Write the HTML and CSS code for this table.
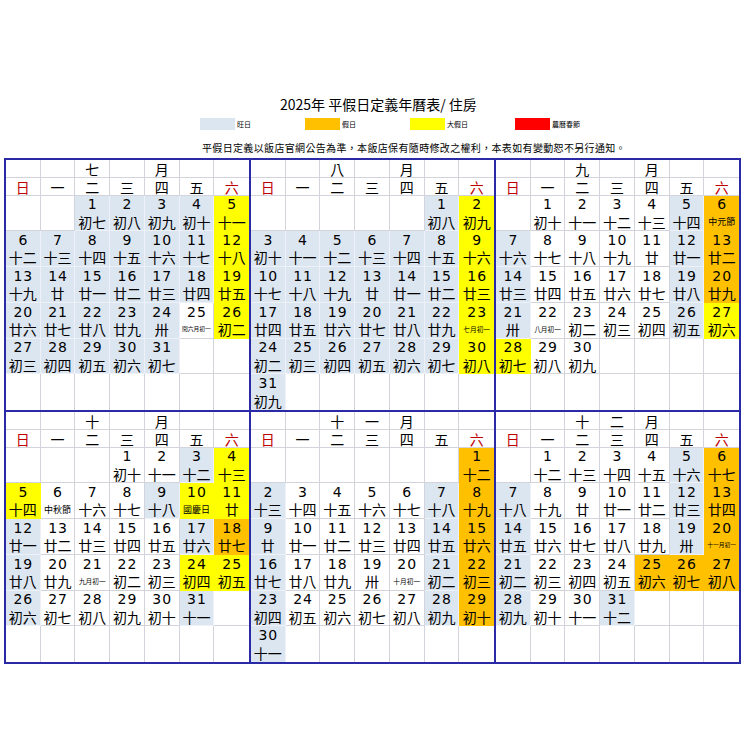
FILE: index.html
```html
<!DOCTYPE html>
<html lang="zh-Hant">
<head>
<meta charset="utf-8">
<title>2025年 平假日定義年曆表</title>
<link rel="stylesheet" href="styles.css">
</head>
<body>
<div class="page">
  <div class="title">2025年 平假日定義年曆表/ 住房</div>
  <div class="legend">
    <div class="item"><span class="sw sw-b"></span><span class="lab">旺日</span></div>
    <div class="item"><span class="sw sw-o"></span><span class="lab">假日</span></div>
    <div class="item"><span class="sw sw-y"></span><span class="lab">大假日</span></div>
    <div class="item"><span class="sw sw-r"></span><span class="lab">農曆春節</span></div>
  </div>
  <div class="note">平假日定義以飯店官網公告為準，本飯店保有隨時修改之權利，本表如有變動恕不另行通知。</div>

  <div class="calendar">
    <!-- July -->
    <div class="m">
      <div class="h"></div><div class="h"></div><div class="h">七</div><div class="h"></div><div class="h">月</div><div class="h"></div><div class="h"></div>
      <div class="w r">日</div><div class="w">一</div><div class="w">二</div><div class="w">三</div><div class="w">四</div><div class="w">五</div><div class="w r">六</div>
      <div class="d"></div><div class="d"></div><div class="d b"><b>1</b><i>初七</i></div><div class="d b"><b>2</b><i>初八</i></div><div class="d b"><b>3</b><i>初九</i></div><div class="d b"><b>4</b><i>初十</i></div><div class="d y"><b>5</b><i>十一</i></div>
      <div class="d b"><b>6</b><i>十二</i></div><div class="d b"><b>7</b><i>十三</i></div><div class="d b"><b>8</b><i>十四</i></div><div class="d b"><b>9</b><i>十五</i></div><div class="d b"><b>10</b><i>十六</i></div><div class="d b"><b>11</b><i>十七</i></div><div class="d y"><b>12</b><i>十八</i></div>
      <div class="d b"><b>13</b><i>十九</i></div><div class="d b"><b>14</b><i>廿</i></div><div class="d b"><b>15</b><i>廿一</i></div><div class="d b"><b>16</b><i>廿二</i></div><div class="d b"><b>17</b><i>廿三</i></div><div class="d b"><b>18</b><i>廿四</i></div><div class="d y"><b>19</b><i>廿五</i></div>
      <div class="d b"><b>20</b><i>廿六</i></div><div class="d b"><b>21</b><i>廿七</i></div><div class="d b"><b>22</b><i>廿八</i></div><div class="d b"><b>23</b><i>廿九</i></div><div class="d b"><b>24</b><i>卅</i></div><div class="d"><b>25</b><i class="xs">閏六月初一</i></div><div class="d y"><b>26</b><i>初二</i></div>
      <div class="d b"><b>27</b><i>初三</i></div><div class="d b"><b>28</b><i>初四</i></div><div class="d b"><b>29</b><i>初五</i></div><div class="d b"><b>30</b><i>初六</i></div><div class="d b"><b>31</b><i>初七</i></div><div class="d"></div><div class="d"></div>
      <div class="d"></div><div class="d"></div><div class="d"></div><div class="d"></div><div class="d"></div><div class="d"></div><div class="d"></div>
    </div>
    <!-- August -->
    <div class="m">
      <div class="h"></div><div class="h"></div><div class="h">八</div><div class="h"></div><div class="h">月</div><div class="h"></div><div class="h"></div>
      <div class="w r">日</div><div class="w">一</div><div class="w">二</div><div class="w">三</div><div class="w">四</div><div class="w">五</div><div class="w r">六</div>
      <div class="d"></div><div class="d"></div><div class="d"></div><div class="d"></div><div class="d"></div><div class="d b"><b>1</b><i>初八</i></div><div class="d y"><b>2</b><i>初九</i></div>
      <div class="d b"><b>3</b><i>初十</i></div><div class="d b"><b>4</b><i>十一</i></div><div class="d b"><b>5</b><i>十二</i></div><div class="d b"><b>6</b><i>十三</i></div><div class="d b"><b>7</b><i>十四</i></div><div class="d b"><b>8</b><i>十五</i></div><div class="d y"><b>9</b><i>十六</i></div>
      <div class="d b"><b>10</b><i>十七</i></div><div class="d b"><b>11</b><i>十八</i></div><div class="d b"><b>12</b><i>十九</i></div><div class="d b"><b>13</b><i>廿</i></div><div class="d b"><b>14</b><i>廿一</i></div><div class="d b"><b>15</b><i>廿二</i></div><div class="d y"><b>16</b><i>廿三</i></div>
      <div class="d b"><b>17</b><i>廿四</i></div><div class="d b"><b>18</b><i>廿五</i></div><div class="d b"><b>19</b><i>廿六</i></div><div class="d b"><b>20</b><i>廿七</i></div><div class="d b"><b>21</b><i>廿八</i></div><div class="d b"><b>22</b><i>廿九</i></div><div class="d y"><b>23</b><i class="sm">七月初一</i></div>
      <div class="d b"><b>24</b><i>初二</i></div><div class="d b"><b>25</b><i>初三</i></div><div class="d b"><b>26</b><i>初四</i></div><div class="d b"><b>27</b><i>初五</i></div><div class="d b"><b>28</b><i>初六</i></div><div class="d b"><b>29</b><i>初七</i></div><div class="d y"><b>30</b><i>初八</i></div>
      <div class="d b"><b>31</b><i>初九</i></div><div class="d"></div><div class="d"></div><div class="d"></div><div class="d"></div><div class="d"></div><div class="d"></div>
    </div>
    <!-- September -->
    <div class="m">
      <div class="h"></div><div class="h"></div><div class="h">九</div><div class="h"></div><div class="h">月</div><div class="h"></div><div class="h"></div>
      <div class="w r">日</div><div class="w">一</div><div class="w">二</div><div class="w">三</div><div class="w">四</div><div class="w">五</div><div class="w r">六</div>
      <div class="d"></div><div class="d"><b>1</b><i>初十</i></div><div class="d"><b>2</b><i>十一</i></div><div class="d"><b>3</b><i>十二</i></div><div class="d"><b>4</b><i>十三</i></div><div class="d b"><b>5</b><i>十四</i></div><div class="d o"><b>6</b><i class="md">中元節</i></div>
      <div class="d b"><b>7</b><i>十六</i></div><div class="d"><b>8</b><i>十七</i></div><div class="d"><b>9</b><i>十八</i></div><div class="d"><b>10</b><i>十九</i></div><div class="d"><b>11</b><i>廿</i></div><div class="d b"><b>12</b><i>廿一</i></div><div class="d o"><b>13</b><i>廿二</i></div>
      <div class="d b"><b>14</b><i>廿三</i></div><div class="d"><b>15</b><i>廿四</i></div><div class="d"><b>16</b><i>廿五</i></div><div class="d"><b>17</b><i>廿六</i></div><div class="d"><b>18</b><i>廿七</i></div><div class="d b"><b>19</b><i>廿八</i></div><div class="d o"><b>20</b><i>廿九</i></div>
      <div class="d b"><b>21</b><i>卅</i></div><div class="d"><b>22</b><i class="sm">八月初一</i></div><div class="d"><b>23</b><i>初二</i></div><div class="d"><b>24</b><i>初三</i></div><div class="d"><b>25</b><i>初四</i></div><div class="d b"><b>26</b><i>初五</i></div><div class="d y"><b>27</b><i>初六</i></div>
      <div class="d y"><b>28</b><i>初七</i></div><div class="d"><b>29</b><i>初八</i></div><div class="d"><b>30</b><i>初九</i></div><div class="d"></div><div class="d"></div><div class="d"></div><div class="d"></div>
      <div class="d"></div><div class="d"></div><div class="d"></div><div class="d"></div><div class="d"></div><div class="d"></div><div class="d"></div>
    </div>
    <!-- October -->
    <div class="m">
      <div class="h"></div><div class="h"></div><div class="h">十</div><div class="h"></div><div class="h">月</div><div class="h"></div><div class="h"></div>
      <div class="w r">日</div><div class="w">一</div><div class="w">二</div><div class="w">三</div><div class="w">四</div><div class="w">五</div><div class="w r">六</div>
      <div class="d"></div><div class="d"></div><div class="d"></div><div class="d"><b>1</b><i>初十</i></div><div class="d"><b>2</b><i>十一</i></div><div class="d b"><b>3</b><i>十二</i></div><div class="d y"><b>4</b><i>十三</i></div>
      <div class="d y"><b>5</b><i>十四</i></div><div class="d"><b>6</b><i class="md">中秋節</i></div><div class="d"><b>7</b><i>十六</i></div><div class="d"><b>8</b><i>十七</i></div><div class="d b"><b>9</b><i>十八</i></div><div class="d y"><b>10</b><i class="md">國慶日</i></div><div class="d y"><b>11</b><i>廿</i></div>
      <div class="d b"><b>12</b><i>廿一</i></div><div class="d"><b>13</b><i>廿二</i></div><div class="d"><b>14</b><i>廿三</i></div><div class="d"><b>15</b><i>廿四</i></div><div class="d"><b>16</b><i>廿五</i></div><div class="d b"><b>17</b><i>廿六</i></div><div class="d o"><b>18</b><i>廿七</i></div>
      <div class="d b"><b>19</b><i>廿八</i></div><div class="d"><b>20</b><i>廿九</i></div><div class="d"><b>21</b><i class="sm">九月初一</i></div><div class="d"><b>22</b><i>初二</i></div><div class="d"><b>23</b><i>初三</i></div><div class="d y"><b>24</b><i>初四</i></div><div class="d y"><b>25</b><i>初五</i></div>
      <div class="d b"><b>26</b><i>初六</i></div><div class="d"><b>27</b><i>初七</i></div><div class="d"><b>28</b><i>初八</i></div><div class="d"><b>29</b><i>初九</i></div><div class="d"><b>30</b><i>初十</i></div><div class="d b"><b>31</b><i>十一</i></div><div class="d"></div>
      <div class="d"></div><div class="d"></div><div class="d"></div><div class="d"></div><div class="d"></div><div class="d"></div><div class="d"></div>
    </div>
    <!-- November -->
    <div class="m">
      <div class="h"></div><div class="h"></div><div class="h">十</div><div class="h">一</div><div class="h">月</div><div class="h"></div><div class="h"></div>
      <div class="w r">日</div><div class="w">一</div><div class="w">二</div><div class="w">三</div><div class="w">四</div><div class="w">五</div><div class="w r">六</div>
      <div class="d"></div><div class="d"></div><div class="d"></div><div class="d"></div><div class="d"></div><div class="d"></div><div class="d o"><b>1</b><i>十二</i></div>
      <div class="d b"><b>2</b><i>十三</i></div><div class="d"><b>3</b><i>十四</i></div><div class="d"><b>4</b><i>十五</i></div><div class="d"><b>5</b><i>十六</i></div><div class="d"><b>6</b><i>十七</i></div><div class="d b"><b>7</b><i>十八</i></div><div class="d o"><b>8</b><i>十九</i></div>
      <div class="d b"><b>9</b><i>廿</i></div><div class="d"><b>10</b><i>廿一</i></div><div class="d"><b>11</b><i>廿二</i></div><div class="d"><b>12</b><i>廿三</i></div><div class="d"><b>13</b><i>廿四</i></div><div class="d b"><b>14</b><i>廿五</i></div><div class="d o"><b>15</b><i>廿六</i></div>
      <div class="d b"><b>16</b><i>廿七</i></div><div class="d"><b>17</b><i>廿八</i></div><div class="d"><b>18</b><i>廿九</i></div><div class="d"><b>19</b><i>卅</i></div><div class="d"><b>20</b><i class="sm">十月初一</i></div><div class="d b"><b>21</b><i>初二</i></div><div class="d o"><b>22</b><i>初三</i></div>
      <div class="d b"><b>23</b><i>初四</i></div><div class="d"><b>24</b><i>初五</i></div><div class="d"><b>25</b><i>初六</i></div><div class="d"><b>26</b><i>初七</i></div><div class="d"><b>27</b><i>初八</i></div><div class="d b"><b>28</b><i>初九</i></div><div class="d o"><b>29</b><i>初十</i></div>
      <div class="d b"><b>30</b><i>十一</i></div><div class="d"></div><div class="d"></div><div class="d"></div><div class="d"></div><div class="d"></div><div class="d"></div>
    </div>
    <!-- December -->
    <div class="m">
      <div class="h"></div><div class="h"></div><div class="h">十</div><div class="h">二</div><div class="h">月</div><div class="h"></div><div class="h"></div>
      <div class="w r">日</div><div class="w">一</div><div class="w">二</div><div class="w">三</div><div class="w">四</div><div class="w">五</div><div class="w r">六</div>
      <div class="d"></div><div class="d"><b>1</b><i>十二</i></div><div class="d"><b>2</b><i>十三</i></div><div class="d"><b>3</b><i>十四</i></div><div class="d"><b>4</b><i>十五</i></div><div class="d b"><b>5</b><i>十六</i></div><div class="d o"><b>6</b><i>十七</i></div>
      <div class="d b"><b>7</b><i>十八</i></div><div class="d"><b>8</b><i>十九</i></div><div class="d"><b>9</b><i>廿</i></div><div class="d"><b>10</b><i>廿一</i></div><div class="d"><b>11</b><i>廿二</i></div><div class="d b"><b>12</b><i>廿三</i></div><div class="d o"><b>13</b><i>廿四</i></div>
      <div class="d b"><b>14</b><i>廿五</i></div><div class="d"><b>15</b><i>廿六</i></div><div class="d"><b>16</b><i>廿七</i></div><div class="d"><b>17</b><i>廿八</i></div><div class="d"><b>18</b><i>廿九</i></div><div class="d b"><b>19</b><i>卅</i></div><div class="d o"><b>20</b><i class="xs">十一月初一</i></div>
      <div class="d b"><b>21</b><i>初二</i></div><div class="d"><b>22</b><i>初三</i></div><div class="d"><b>23</b><i>初四</i></div><div class="d"><b>24</b><i>初五</i></div><div class="d o"><b>25</b><i>初六</i></div><div class="d o"><b>26</b><i>初七</i></div><div class="d o"><b>27</b><i>初八</i></div>
      <div class="d b"><b>28</b><i>初九</i></div><div class="d"><b>29</b><i>初十</i></div><div class="d"><b>30</b><i>十一</i></div><div class="d b"><b>31</b><i>十二</i></div><div class="d"></div><div class="d"></div><div class="d"></div>
      <div class="d"></div><div class="d"></div><div class="d"></div><div class="d"></div><div class="d"></div><div class="d"></div><div class="d"></div>
    </div>
  </div>
</div>
</body>
</html>
```

FILE: styles.css
```css
* { box-sizing: border-box; }
html, body { margin: 0; padding: 0; background: #fff; }
body {
  font-family: "Noto Sans CJK TC", "Noto Sans", sans-serif;
  color: #000;
}
.page { padding-top: 94px; }

.title {
  margin-left: 280px;
  font-size: 14px;
  line-height: 20px;
  height: 20px;
  white-space: nowrap;
}

.legend {
  display: flex;
  margin-left: 200px;
  margin-top: 4px;
  height: 12px;
}
.legend .item {
  width: 105px;
  display: flex;
  align-items: center;
  gap: 2px;
}
.sw { display: block; width: 35px; height: 12px; }
.sw-b { background: #dce6f1; }
.sw-o { background: #ffc000; }
.sw-y { background: #ffff00; }
.sw-r { background: #ff0000; }
.lab { font-size: 7px; line-height: 12px; white-space: nowrap; }

.note {
  margin-left: 202px;
  margin-top: 11px;
  font-size: 10px;
  line-height: 14px;
  height: 14px;
  letter-spacing: 0.34px;
  white-space: nowrap;
}

.calendar {
  margin-top: 3px;
  margin-left: 4px;
  display: grid;
  grid-template-columns: repeat(3, 245px);
  width: 737px;
  border-left: 2px solid #2a2aa6;
  border-top: 2px solid #2a2aa6;
}
.m {
  display: grid;
  grid-template-columns: repeat(7, 1fr);
  grid-template-rows: 1fr 1fr repeat(6, 2fr);
  height: 252px;
  border-right: 2px solid #2a2aa6;
  border-bottom: 2px solid #2a2aa6;
}
.m > div {
  border-right: 1px solid #d3d3dc;
  border-bottom: 1px solid #d3d3dc;
  min-width: 0;
}
.m > div:nth-child(7n) { border-right: none; }
.m > div:nth-last-child(-n+7) { border-bottom: none; }

.h, .w {
  display: flex;
  align-items: center;
  justify-content: center;
  font-size: 14px;
  line-height: 1;
}
.h { padding-top: 2px; }
.w { padding-top: 1px; }
.w.r { color: #c00000; }

.d {
  display: flex;
  flex-direction: column;
}
.d b, .d i {
  flex: 1;
  display: flex;
  align-items: center;
  justify-content: center;
  font-weight: normal;
  font-style: normal;
  line-height: 1;
  white-space: nowrap;
}
.d b {
  font-family: "DejaVu Sans", "Noto Sans CJK TC", sans-serif;
  font-size: 14px;
  letter-spacing: 1px;
  padding-left: 1px;
}
.d i { font-size: 14px; }
.d i.md { font-size: 9px; }
.d i.sm { font-size: 6.7px; }
.d i.xs { font-size: 5.8px; }

.d.b { background: #dce6f1; border-color: #eef2f8; }
.d.y { background: #ffff00; border-color: #ffff00; }
.d.o { background: #ffc000; border-color: #ffc000; }
```
